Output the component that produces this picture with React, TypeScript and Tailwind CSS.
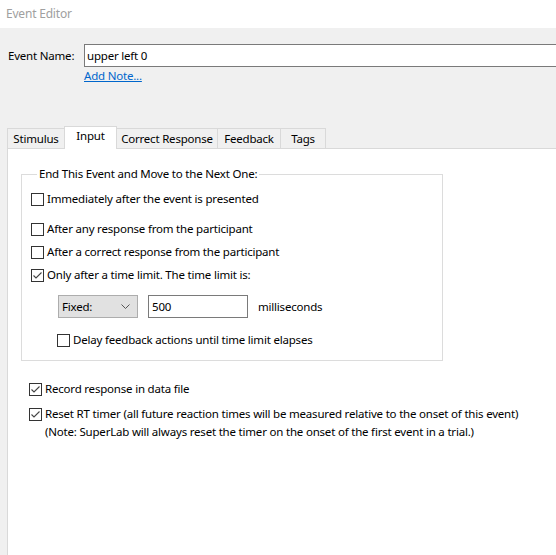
import React from "react";

const FONT = { fontFamily: '"Segoe UI", "Noto Sans", sans-serif', letterSpacing: "-0.2px" };

function Check({ checked }: { checked?: boolean }) {
  return (
    <span className="w-[13px] h-[13px] shrink-0 border border-[#333333] bg-white flex items-center justify-center">
      {checked && (
        <svg width="11" height="11" viewBox="0 0 11 11">
          <path d="M1.5 5.5 L4 8 L9.5 2.5" fill="none" stroke="#444444" strokeWidth="1.1" />
        </svg>
      )}
    </span>
  );
}

function CheckRow({ label, checked, className = "" }: { label: string; checked?: boolean; className?: string }) {
  return (
    <div className={`flex items-center gap-[3px] h-[16px] ${className}`}>
      <Check checked={checked} />
      <span className="whitespace-nowrap">{label}</span>
    </div>
  );
}

const TABS = [
  { name: "Stimulus", w: "w-[58px]" },
  { name: "Input", w: "w-[53px]", active: true },
  { name: "Correct Response", w: "w-[102px]" },
  { name: "Feedback", w: "w-[64px]" },
  { name: "Tags", w: "w-[46px]" },
];

export default function App() {
  return (
    <div className="w-[556px] h-[555px] overflow-hidden bg-[#f0f0f0] text-[11.5px] text-black leading-[16px]" style={FONT}>
      {/* title bar */}
      <div className="h-[28px] bg-white flex items-center pl-[6px] text-[#a0a0a0] text-[12px]">Event Editor</div>

      {/* name */}
      <div className="flex items-center mt-[16px]">
        <span className="w-[84px] shrink-0 pl-[8px] whitespace-nowrap">Event Name:</span>
        <div className="w-[490px] shrink-0 h-[23px] border border-[#7a7a7a] bg-white flex items-center pl-[2px]">upper left 0</div>
      </div>
      <div className="pl-[84px] mt-[1px] text-[#0066cc] underline">Add Note...</div>

      {/* tabs */}
      <div className="flex items-end ml-[8px] mt-[42px] h-[22px]">
        {TABS.map((t) =>
          t.active ? (
            <div
              key={t.name}
              className={`${t.w} h-[23px] -mb-px -ml-px relative z-10 bg-white border border-b-0 border-[#d9d9d9] flex items-start justify-center pt-[1px]`}
            >
              {t.name}
            </div>
          ) : (
            <div
              key={t.name}
              className={`${t.w} h-[20px] -ml-px bg-[#f0f0f0] border border-b-0 border-[#d9d9d9] flex items-center justify-center`}
            >
              {t.name}
            </div>
          )
        )}
      </div>

      {/* panel */}
      <div className="ml-[7px] h-[420px] bg-white border-l border-t border-[#d9d9d9] pt-[17px] pl-[13px]">
        <fieldset className="w-[422px] border border-[#dcdcdc] pl-[9px] pb-[12px]">
          <legend className="ml-[6px] px-[2px]">End This Event and Move to the Next One:</legend>
          <CheckRow className="mt-[9px]" label="Immediately after the event is presented" />
          <CheckRow className="mt-[14px]" label="After any response from the participant" />
          <CheckRow className="mt-[7px]" label="After a correct response from the participant" />
          <CheckRow className="mt-[7px]" label="Only after a time limit. The time limit is:" checked />
          <div className="flex items-center mt-[12px] ml-[27px]">
            <div className="w-[80px] h-[23px] bg-[#e1e1e1] border border-[#adadad] flex items-center justify-between pl-[3px] pr-[7px]">
              <span>Fixed:</span>
              <svg width="9" height="6" viewBox="0 0 9 6">
                <path d="M0.5 0.5 L4.5 4.5 L8.5 0.5" fill="none" stroke="#555555" strokeWidth="1" />
              </svg>
            </div>
            <div className="w-[100px] h-[23px] ml-[10px] border border-[#7a7a7a] bg-white flex items-center pl-[3px]">500</div>
            <span className="ml-[10px]">milliseconds</span>
          </div>
          <CheckRow className="mt-[14px] ml-[26px]" label="Delay feedback actions until time limit elapses" />
        </fieldset>

        <CheckRow className="mt-[20px] ml-[8px]" label="Record response in data file" checked />
        <CheckRow className="mt-[9px] ml-[8px]" label="Reset RT timer (all future reaction times will be measured relative to the onset of this event)" checked />
        <div className="ml-[24px] mt-[2px] whitespace-nowrap">
          (Note: SuperLab will always reset the timer on the onset of the first event in a trial.)
        </div>
      </div>
    </div>
  );
}
